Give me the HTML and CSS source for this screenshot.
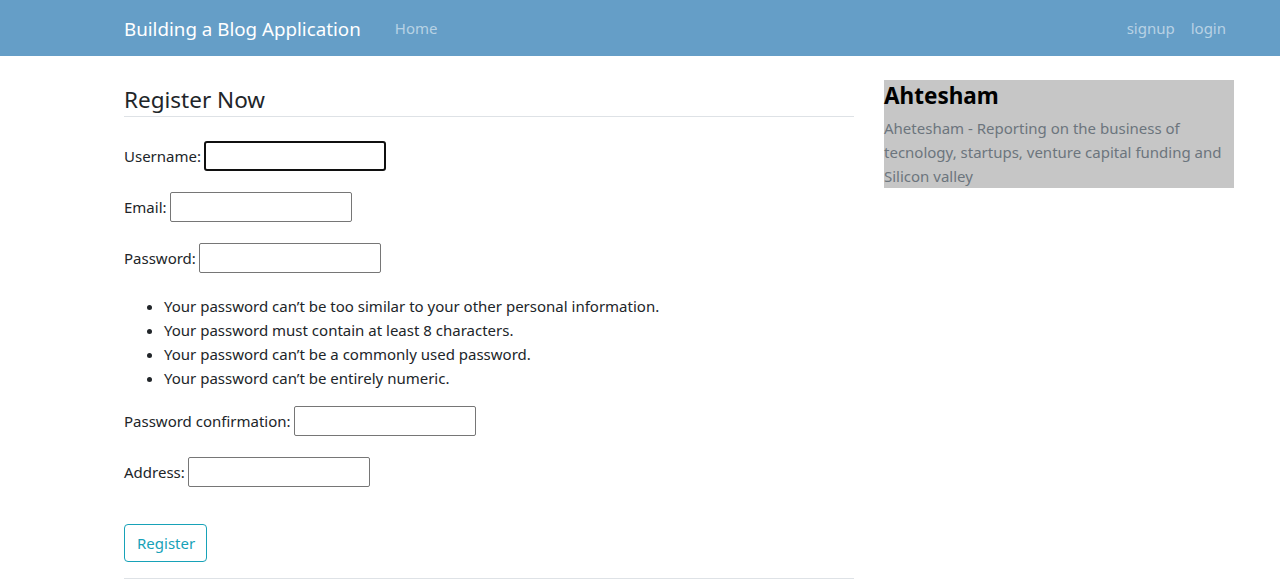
FILE: index.html
```html
<!DOCTYPE html>
<html lang="en">
<head>
<meta charset="utf-8">
<title>Building a Blog Application</title>
<link rel="stylesheet" href="styles.css">
</head>
<body>
<header class="navbar">
  <div class="container nav-inner">
    <a class="brand" href="#">Building a Blog Application</a>
    <nav class="nav-left"><a class="nav-link" href="#">Home</a></nav>
    <nav class="nav-right">
      <a class="nav-link" href="#">signup</a>
      <a class="nav-link" href="#">login</a>
    </nav>
  </div>
</header>
<main class="container page">
  <section class="main-col">
    <h1 class="legend">Register Now</h1>
    <form class="form">
      <div class="field"><label for="u">Username:</label><input id="u" class="input focused" type="text"></div>
      <div class="field"><label for="e">Email:</label><input id="e" class="input" type="text"></div>
      <div class="field"><label for="p">Password:</label><input id="p" class="input" type="password"></div>
      <ul class="help">
        <li>Your password can’t be too similar to your other personal information.</li>
        <li>Your password must contain at least 8 characters.</li>
        <li>Your password can’t be a commonly used password.</li>
        <li>Your password can’t be entirely numeric.</li>
      </ul>
      <div class="field"><label for="p2">Password confirmation:</label><input id="p2" class="input" type="password"></div>
      <div class="field"><label for="a">Address:</label><input id="a" class="input" type="text"></div>
      <div class="actions"><button class="btn" type="button">Register</button></div>
    </form>
    <div class="footer-line"></div>
  </section>
  <aside class="sidebar">
    <h3 class="side-title">Ahtesham</h3>
    <p class="side-text">Ahetesham - Reporting on the business of tecnology, startups, venture capital funding and Silicon valley</p>
  </aside>
</main>
</body>
</html>
```
FILE: styles.css
```css
* { box-sizing: border-box; }
html, body { margin: 0; padding: 0; }
body {
  font-family: "Noto Sans", "Open Sans", sans-serif;
  font-size: 15px;
  line-height: 24px;
  color: #212529;
  background: #fff;
}
a { text-decoration: none; }
.container { width: 1110px; margin-left: 124px; }

.navbar { background: #659ec7; height: 56px; }
.nav-inner { display: flex; align-items: center; height: 56px; }
.brand { color: #fff; font-size: 18.75px; line-height: 30px; margin-right: 26px; padding-top: 1px; }
.nav-left { display: flex; flex: 1; }
.nav-right { display: flex; margin-right: 0; }
.nav-link { color: rgba(255,255,255,0.55); padding: 8px 8px 8px; line-height: 24px; }

.page { display: flex; gap: 30px; margin-top: 24px; align-items: flex-start; }
.main-col { width: 730px; }
.legend {
  font-size: 22.5px; font-weight: 400; line-height: 29px;
  margin: 5px 0 0; padding: 0 0 2px; border-bottom: 1px solid #dee2e6;
  color: #212529;
}
.form { display: flex; flex-direction: column; padding-top: 24px; }
.field { display: flex; align-items: center; height: 30px; margin-bottom: 21px; }
.field label { margin-right: 3px; }
.input {
  width: 182px; height: 30px; border: 1px solid #767676; border-radius: 2px;
  padding: 1px 2px; font: inherit; background: #fff;
}
.input.focused { border: 2px solid #101010; border-radius: 3px; outline: none; }
.help { margin: 0 0 16px; padding-left: 40px; }
.help li { line-height: 24px; }
.actions { padding-top: 16px; }
.btn {
  font: inherit; color: #17a2b8; background: transparent;
  border: 1px solid #17a2b8; border-radius: 4px;
  padding: 6px 12px; line-height: 24px; height: 38px; width: 83px;
}
.footer-line { border-top: 1px solid #dee2e6; margin-top: 16px; height: 10px; }

.sidebar { width: 350px; background: #c6c6c6; }
.side-title { font-size: 22.5px; font-weight: 700; line-height: 29px; margin: 0 0 7px; padding-top: 1px; color: #000; }
.side-text { margin: 0; margin-top: -1px; color: #6c757d; line-height: 24px; }
```
